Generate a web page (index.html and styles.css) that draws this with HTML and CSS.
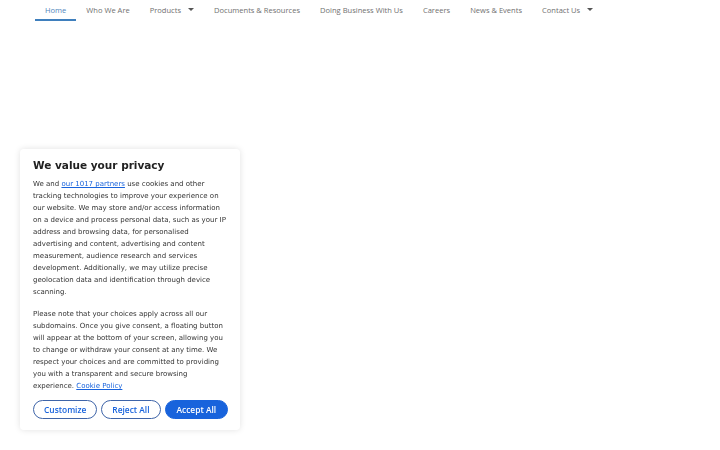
FILE: index.html
```html
<!DOCTYPE html>
<html>
<head>
  <title>Home</title>
  <link rel="stylesheet" href="styles.css">
</head>
<body>
  <!-- --- Main navigation --- -->
  <nav class="main-nav">
    <a class="nav-item active" href="#">Home</a>
    <a class="nav-item" href="#">Who We Are</a>
    <a class="nav-item has-sub" href="#">Products <span class="caret"></span></a>
    <a class="nav-item" href="#">Documents &amp; Resources</a>
    <a class="nav-item" href="#">Doing Business With Us</a>
    <a class="nav-item" href="#">Careers</a>
    <a class="nav-item" href="#">News &amp; Events</a>
    <a class="nav-item has-sub" href="#">Contact Us <span class="caret"></span></a>
  </nav>

  <!-- --- Cookie consent box --- -->
  <div class="consent-box">
    <h3 class="consent-title">We value your privacy</h3>
    <p class="consent-text">We and <a href="#">our 1017 partners</a> use cookies and other tracking technologies to improve your experience on our website. We may store and/or access information on a device and process personal data, such as your IP address and browsing data, for personalised advertising and content, advertising and content measurement, audience research and services development. Additionally, we may utilize precise geolocation data and identification through device scanning.</p>
    <p class="consent-text">Please note that your choices apply across all our subdomains. Once you give consent, a floating button will appear at the bottom of your screen, allowing you to change or withdraw your consent at any time. We respect your choices and are committed to providing you with a transparent and secure browsing experience. <a href="#">Cookie Policy</a></p>
    <div class="consent-buttons">
      <button class="consent-btn">Customize</button>
      <button class="consent-btn">Reject All</button>
      <button class="consent-btn primary">Accept All</button>
    </div>
  </div>
</body>
</html>
```

FILE: styles.css
```css
body {
  margin: 0;
  background-color: #ffffff;
  font-family: "Open Sans", sans-serif;
}

/* Top navigation */
.main-nav {
  display: flex;
  padding-left: 35px;
}
.nav-item {
  display: flex;
  align-items: center;
  height: 19px;
  padding: 0 10px;
  font-size: 7.55px;
  color: #707070;
  text-decoration: none;
  border-bottom: 2px solid transparent;
}
.nav-item.active {
  color: #4f86bd;
  border-bottom-color: #3f7fbd;
}
.caret {
  display: inline-block;
  margin-left: 7px;
  width: 0;
  height: 0;
  border-left: 3px solid transparent;
  border-right: 3px solid transparent;
  border-top: 3px solid #555555;
}

/* Cookie consent box */
.consent-box {
  position: fixed;
  left: 20px;
  top: 149px;
  width: 220px;
  box-sizing: border-box;
  padding: 10px 13px 11px;
  background-color: #ffffff;
  border-radius: 4px;
  box-shadow: 0 0 6px rgba(0, 0, 0, 0.12);
  font-family: "DejaVu Sans", sans-serif;
}
.consent-title {
  margin: 0 0 7px;
  font-size: 10.5px;
  font-weight: bold;
  color: #212121;
}
.consent-text {
  margin: 0 0 10px;
  font-size: 7px;
  line-height: 12px;
  color: #333333;
}
.consent-text a {
  color: #1863dc;
}
.consent-buttons {
  display: flex;
  gap: 4px;
  margin-top: -2px;
}
.consent-btn {
  flex-shrink: 0;
  height: 19px;
  padding: 0 10px;
  white-space: nowrap;
  border: 1.5px solid #3e64a8;
  border-radius: 12px;
  background-color: #ffffff;
  color: #1863dc;
  font-family: "Open Sans", sans-serif;
  font-size: 8.4px;
  font-weight: 600;
}
.consent-btn.primary {
  padding: 0 11px;
  background-color: #1863dc;
  border-color: #1863dc;
  color: #ffffff;
}
```
